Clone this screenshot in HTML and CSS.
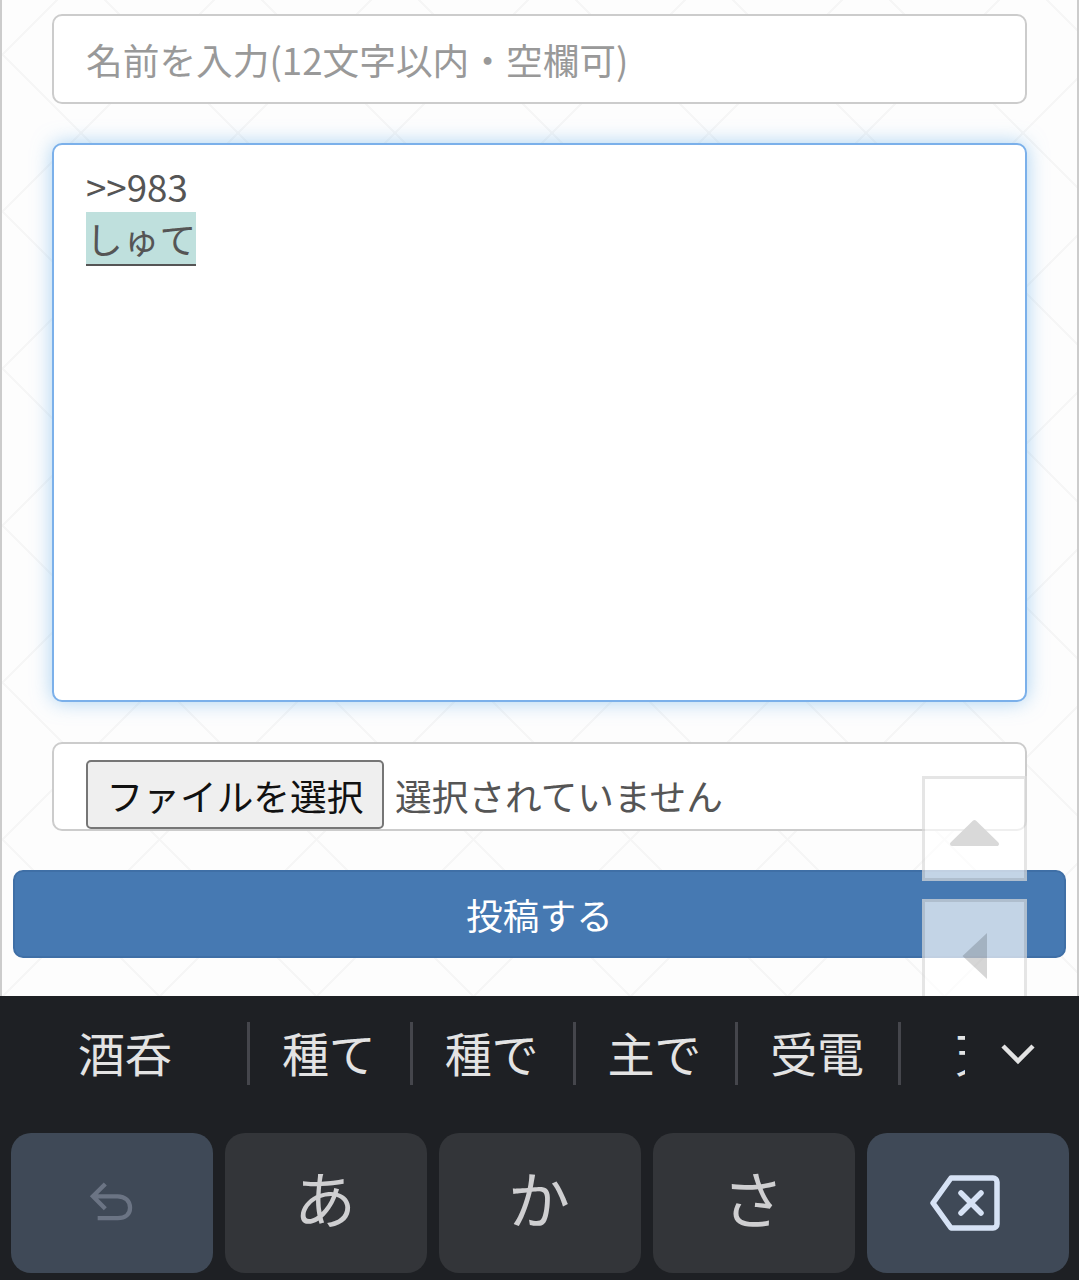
FILE: index.html
```html
<!DOCTYPE html>
<html lang="ja">
<head>
    <meta charset="UTF-8">
    <meta name="viewport" content="width=device-width, initial-scale=1.0">
    <title>投稿フォーム</title>
    <link rel="stylesheet" href="styles.css">
</head>
<body>
    <div class="page">
        <form class="post-form">
            <div class="fields">
                <input class="name-input" type="text" placeholder="名前を入力(12文字以内・空欄可)">
                <div class="message-box">
                    <div>&gt;&gt;983</div>
                    <div><span class="composing">しゅて</span></div>
                </div>
                <div class="file-box">
                    <button class="file-btn" type="button">ファイルを選択</button>
                    <span class="file-name">選択されていません</span>
                </div>
            </div>
            <div class="actions">
                <button class="submit-btn" type="button">投稿する</button>
            </div>
        </form>

        <div class="float-btn float-up">
            <svg width="51" height="28" viewBox="0 0 51 28"><path d="M25.5 3 L48 25 H3 Z" fill="#d9d9d9" stroke="#d9d9d9" stroke-width="4" stroke-linejoin="round"/></svg>
        </div>
        <div class="float-btn float-back">
            <svg width="28" height="50" viewBox="0 0 28 50"><path d="M26 2 V48 L1.5 25 Z" fill="#000" fill-opacity="0.16"/></svg>
        </div>
    </div>

    <div class="keyboard">
        <div class="candidates">
            <div class="candidate first">酒呑</div>
            <div class="candidate">種て</div>
            <div class="candidate">種で</div>
            <div class="candidate">主で</div>
            <div class="candidate">受電</div>
            <div class="candidate last">天</div>
            <div class="expand">
                <svg width="36" height="24" viewBox="0 0 36 24"><path d="M3 4 L18 19 L33 4" fill="none" stroke="#e3e3e3" stroke-width="4.5"/></svg>
            </div>
        </div>
        <div class="keys">
            <div class="key side">
                <svg class="undo" width="44" height="40" viewBox="0 0 46 42"><path d="M17 2 L4 15 L17 28 M4 15 H30 C38 15 43 20 43 27 C43 34 38 38 30 38 H9" fill="none" stroke="#6b7484" stroke-width="4.5"/></svg>
            </div>
            <div class="key">あ</div>
            <div class="key">か</div>
            <div class="key">さ</div>
            <div class="key side">
                <svg class="backspace" width="70" height="56" viewBox="0 0 70 56"><path d="M21 3 H63 A4 4 0 0 1 67 7 V49 A4 4 0 0 1 63 53 H21 L3 28 Z" fill="none" stroke="#d6e2f5" stroke-width="5.5" stroke-linejoin="round"/><path d="M31 18 L51 38 M51 18 L31 38" fill="none" stroke="#d6e2f5" stroke-width="5.5" stroke-linecap="round"/></svg>
            </div>
        </div>
    </div>
</body>
</html>
```

FILE: styles.css
```css
* {
    box-sizing: border-box;
}

body {
    margin: 0;
    font-family: "Noto Sans CJK JP", "Noto Sans", sans-serif;
    font-size: 36.7px;
    color: #555;
}

.page {
    position: relative;
    height: 996px;
    overflow: hidden;
    border-left: 2px solid #ccc;
    border-right: 2px solid #ccc;
    background-color: #fdfdfd;
    background-image:
        linear-gradient(45deg, transparent calc(50% - 1px), #f6f6f6 calc(50% - 1px), #f6f6f6 calc(50% + 1px), transparent calc(50% + 1px)),
        linear-gradient(-45deg, transparent calc(50% - 1px), #f6f6f6 calc(50% - 1px), #f6f6f6 calc(50% + 1px), transparent calc(50% + 1px));
    background-size: 157px 157px;
    background-position: 79px -24px;
}

.post-form {
    padding-top: 14px;
}

.fields {
    padding: 0 50px;
}

.name-input {
    display: block;
    width: 100%;
    height: 90px;
    padding: 0 32px;
    border: 2px solid #ccc;
    border-radius: 10px;
    background: #fff;
    font: inherit;
    color: #555;
    margin-bottom: 39px;
}

.name-input::placeholder {
    color: #999;
    opacity: 1;
}

.message-box {
    height: 559px;
    padding: 15px 32px;
    border: 2px solid #7bb0ea;
    border-radius: 10px;
    background: #fff;
    line-height: 52px;
    box-shadow: 0 0 20px rgba(102, 175, 233, 0.55);
    margin-bottom: 40px;
}

.composing {
    display: inline-block;
    height: 54px;
    line-height: 53px;
    background: #bfe0dd;
    border-bottom: 2px solid #555;
}

.file-box {
    display: flex;
    align-items: flex-start;
    gap: 11px;
    height: 89px;
    padding: 16px 32px 0;
    border: 2px solid #ccc;
    border-radius: 10px;
    background: #fff;
    margin-bottom: 39px;
}

.file-btn {
    width: 298px;
    height: 69px;
    padding: 0;
    border: 2px solid #767676;
    border-radius: 5px;
    background: #efefef;
    font: inherit;
    color: #111;
    flex-shrink: 0;
}

.file-name {
    line-height: 71px;
}

.actions {
    padding: 0 11px;
}

.submit-btn {
    display: block;
    width: 100%;
    height: 88px;
    border: 2px solid #3f6fa6;
    border-radius: 10px;
    background: #4679b2;
    color: #fff;
    font: inherit;
}

.float-btn {
    position: absolute;
    left: 920px;
    width: 105px;
    height: 105px;
    display: flex;
    align-items: center;
    justify-content: center;
    background: rgba(255, 255, 255, 0.68);
    border: 3px solid rgba(0, 0, 0, 0.1);
}

.float-up {
    top: 776px;
}

.float-up svg {
    margin-top: 8px;
}

.float-back {
    top: 899px;
}

.float-back svg {
    margin-top: 9px;
}

.keyboard {
    height: 284px;
    padding-top: 26px;
    background: #1e2024;
}

.candidates {
    position: relative;
    display: flex;
    height: 63px;
    color: #e3e3e3;
    font-size: 47px;
}

.candidate {
    display: flex;
    align-items: center;
    justify-content: center;
    width: 162.75px;
    height: 63px;
    padding: 0 2px 4px 0;
    flex-shrink: 0;
    border-right: 3px solid #45464c;
}

.candidate.first {
    width: 250px;
    padding: 0 0 4px 3px;
}

.candidate.last {
    padding-right: 8px;
    border-right: none;
}

.expand {
    position: absolute;
    top: 0;
    right: 0;
    bottom: 0;
    width: 114px;
    padding-right: 8px;
    display: flex;
    align-items: center;
    justify-content: center;
    background: #1e2024;
}

.keys {
    display: flex;
    gap: 12px;
    margin-top: 48px;
    padding-left: 11px;
}

.key {
    width: 202px;
    height: 140px;
    padding: 0 2px 13px 0;
    display: flex;
    align-items: center;
    justify-content: center;
    border-radius: 20px;
    background: #333539;
    color: #cfcfd1;
    font-size: 62px;
}

.key.side {
    padding: 0;
    background: #3f4957;
}

.undo {
    margin-right: 3px;
    margin-bottom: 3px;
}

.backspace {
    margin-right: 6px;
}
```
